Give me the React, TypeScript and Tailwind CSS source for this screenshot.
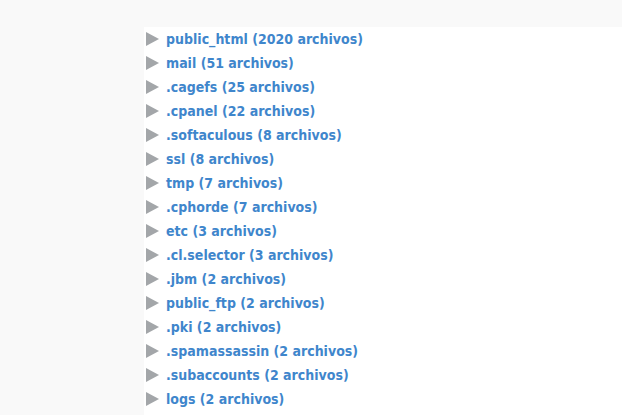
const items = [
  "public_html (2020 archivos)",
  "mail (51 archivos)",
  ".cagefs (25 archivos)",
  ".cpanel (22 archivos)",
  ".softaculous (8 archivos)",
  "ssl (8 archivos)",
  "tmp (7 archivos)",
  ".cphorde (7 archivos)",
  "etc (3 archivos)",
  ".cl.selector (3 archivos)",
  ".jbm (2 archivos)",
  "public_ftp (2 archivos)",
  ".pki (2 archivos)",
  ".spamassassin (2 archivos)",
  ".subaccounts (2 archivos)",
  "logs (2 archivos)",
];

export default function App() {
  return (
    <div className="w-[622px] h-[415px] bg-[#f9f9f9] overflow-hidden pt-[27px] pl-[144px]">
      <div className="bg-white h-full pl-[2px] pt-0">
        <ul className="flex flex-col">
          {items.map((t) => (
            <li key={t} className="flex items-center h-[24px]">
              <svg width="13" height="14" viewBox="0 0 13 14" className="mr-[7px]">
                <polygon points="0,0 13,7 0,14" fill="#a3a6a9" />
              </svg>
              <span
                className="text-[14px] font-bold text-[#3f86cc]"
                style={{ fontFamily: '"DejaVu Sans Condensed", "DejaVu Sans", sans-serif' }}
              >
                {t}
              </span>
            </li>
          ))}
        </ul>
      </div>
    </div>
  );
}
